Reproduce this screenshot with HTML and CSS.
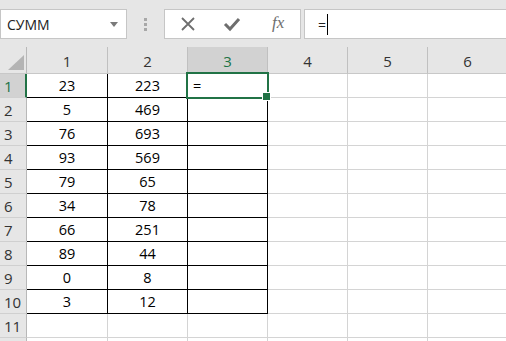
FILE: index.html
```html
<!DOCTYPE html>
<html lang="ru">
<head>
<meta charset="utf-8">
<link rel="stylesheet" href="styles.css">
</head>
<body>
<div class="toolbar">
  <div class="namebox">
    <span class="name">СУММ</span>
    <svg class="caret" width="8" height="5" viewBox="0 0 8 5"><path d="M0 0 H8 L4 5 Z" fill="#7a7a7a"/></svg>
  </div>
  <div class="grip"><i></i><i></i><i></i></div>
  <div class="fxbox">
    <svg class="ico" width="16" height="16" viewBox="0 0 16 16"><path d="M2 2 L14 14 M14 2 L2 14" stroke="#6e6e6e" stroke-width="1.8" fill="none"/></svg>
    <svg class="ico" width="18" height="16" viewBox="0 0 18 16"><path d="M2 8 L7 13 L16 3" stroke="#6e6e6e" stroke-width="3" fill="none"/></svg>
    <span class="fx">fx</span>
  </div>
  <div class="formula"><span class="eq">=</span><span class="cursor"></span></div>
</div>
<div class="sheet">
  <div class="corner"><span class="tri"></span></div>
  <div class="ch">1</div><div class="ch">2</div><div class="ch ch-sel">3</div><div class="ch">4</div><div class="ch">5</div><div class="ch">6</div>

  <div class="rh rh-sel">1</div><div class="c d">23</div><div class="c d">223</div><div class="c d active">=</div><div class="c"></div><div class="c"></div><div class="c"></div>
  <div class="rh">2</div><div class="c d">5</div><div class="c d">469</div><div class="c d"></div><div class="c"></div><div class="c"></div><div class="c"></div>
  <div class="rh">3</div><div class="c d">76</div><div class="c d">693</div><div class="c d"></div><div class="c"></div><div class="c"></div><div class="c"></div>
  <div class="rh">4</div><div class="c d">93</div><div class="c d">569</div><div class="c d"></div><div class="c"></div><div class="c"></div><div class="c"></div>
  <div class="rh">5</div><div class="c d">79</div><div class="c d">65</div><div class="c d"></div><div class="c"></div><div class="c"></div><div class="c"></div>
  <div class="rh">6</div><div class="c d">34</div><div class="c d">78</div><div class="c d"></div><div class="c"></div><div class="c"></div><div class="c"></div>
  <div class="rh">7</div><div class="c d">66</div><div class="c d">251</div><div class="c d"></div><div class="c"></div><div class="c"></div><div class="c"></div>
  <div class="rh">8</div><div class="c d">89</div><div class="c d">44</div><div class="c d"></div><div class="c"></div><div class="c"></div><div class="c"></div>
  <div class="rh">9</div><div class="c d">0</div><div class="c d">8</div><div class="c d"></div><div class="c"></div><div class="c"></div><div class="c"></div>
  <div class="rh">10</div><div class="c d">3</div><div class="c d">12</div><div class="c d"></div><div class="c"></div><div class="c"></div><div class="c"></div>
  <div class="rh">11</div><div class="c"></div><div class="c"></div><div class="c"></div><div class="c"></div><div class="c"></div><div class="c"></div>
  <div class="rh"></div><div class="c"></div><div class="c"></div><div class="c"></div><div class="c"></div><div class="c"></div><div class="c"></div>
</div>
</body>
</html>
```

FILE: styles.css
```css
* { box-sizing: border-box; }
html, body { margin: 0; padding: 0; }
body {
  background: #e6e6e6;
  width: 506px;
  height: 341px;
  overflow: hidden;
  font-family: "Open Sans", "Noto Sans", sans-serif;
}
.toolbar {
  height: 47px;
  display: flex;
  align-items: flex-start;
  padding-top: 9px;
}
.namebox {
  width: 127px;
  height: 30px;
  background: #fff;
  border: 1px solid #c6c6c6;
  display: flex;
  align-items: center;
  justify-content: space-between;
  padding: 0 8px 0 6px;
}
.name { font-size: 14px; color: #222; }
.caret { margin-top: 1px; }
.grip {
  width: 37px;
  height: 30px;
  display: flex;
  flex-direction: column;
  align-items: center;
  justify-content: center;
  gap: 2px;
}
.grip i { display: block; width: 3px; height: 3px; background: #a8a8a8; }
.fxbox {
  width: 137px;
  height: 30px;
  background: #fff;
  border: 1px solid #c6c6c6;
  display: flex;
  align-items: center;
  padding-left: 15px;
  gap: 27px;
}
.fx {
  font-family: "Liberation Serif", "DejaVu Serif", serif;
  font-style: italic;
  font-size: 17px;
  color: #6e6e6e;
  margin-left: 4px;
  margin-top: -2px;
}
.formula {
  flex: 1;
  margin-left: 3px;
  height: 30px;
  background: #fff;
  border: 1px solid #c6c6c6;
  border-right: none;
  display: flex;
  align-items: center;
  padding-left: 13px;
}
.eq { font-size: 14px; color: #222; }
.cursor { width: 1px; height: 21px; background: #000; margin-left: 1px; }

.sheet {
  display: grid;
  grid-template-columns: 27px 81px repeat(5, 80px);
  grid-template-rows: 27px;
  grid-auto-rows: 24px;
  background: #fff;
}
.corner {
  background: #e6e6e6;
  border-right: 1px solid #b8b8b8;
  border-bottom: 1px solid #c8c8c8;
  position: relative;
}
.tri {
  position: absolute;
  left: 8px;
  top: 8px;
  width: 0;
  height: 0;
  border-left: 16px solid transparent;
  border-bottom: 15px solid #b4b4b4;
}
.ch {
  background: #e6e6e6;
  border-bottom: 1px solid #c8c8c8;
  border-right: 1px solid #c0c0c0;
  display: flex;
  align-items: flex-end;
  justify-content: center;
  padding-bottom: 2px;
  font-size: 15px;
  color: #333;
}
.ch-sel {
  background: #d2d2d2;
  color: #217346;
}
.rh {
  background: #e6e6e6;
  border-right: 1px solid #b8b8b8;
  border-bottom: 1px solid #d0d0d0;
  display: flex;
  align-items: center;
  padding-left: 4px;
  font-size: 15px;
  color: #333;
}
.rh-sel {
  background: #d2d2d2;
  color: #217346;
  border-right: 2px solid #217346;
}
.c {
  border-right: 1px solid #d4d4d4;
  border-bottom: 1px solid #d4d4d4;
  display: flex;
  align-items: center;
  justify-content: center;
  font-size: 14.5px;
  color: #000;
}
.c.d {
  border-right-color: #000;
  border-bottom-color: #000;
}
.active {
  position: relative;
  justify-content: flex-start;
  padding-left: 5px;
}
.active::after {
  content: "";
  position: absolute;
  left: -2px;
  top: -2px;
  right: -2px;
  bottom: -2px;
  border: 2px solid #217346;
}
.active::before {
  content: "";
  position: absolute;
  right: -4px;
  bottom: -4px;
  width: 7px;
  height: 7px;
  background: #217346;
  border: 1px solid #fff;
  z-index: 1;
}
```
